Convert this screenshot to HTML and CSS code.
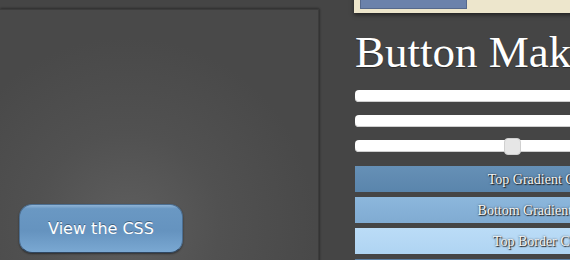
FILE: index.html
```html
<!DOCTYPE html>
<html lang="en">
  <head>
    <meta charset="UTF-8" />
    <title>Button Maker</title>
    <link rel="stylesheet" href="styles.css">
  </head>
  <body>
    <div class="page">
      <div class="preview">
        <button class="css-btn">View the CSS</button>
      </div>

      <div class="controls">
        <div class="frame">
          <div class="frame-img"></div>
        </div>

        <h1>Button Maker</h1>

        <div class="sliders">
          <div class="slider"></div>
          <div class="slider"></div>
          <div class="slider">
            <span class="thumb" style="left: 149px"></span>
          </div>
        </div>

        <div class="swatches">
          <div class="swatch top-grad">Top Gradient Color</div>
          <div class="swatch bottom-grad">Bottom Gradient Color</div>
          <div class="swatch top-border">Top Border Color</div>
          <div class="swatch bottom-border">Bottom Border Color</div>
        </div>
      </div>
    </div>
  </body>
</html>
```

FILE: styles.css
```css
body {
  margin: 0;
  background: #454545;
  overflow: hidden;
  font-family: "Liberation Serif", serif;
}
.page {
  display: flex;
  height: 260px;
}
.preview {
  width: 319px;
  flex-shrink: 0;
  margin-top: 9px;
  height: 300px;
  background: radial-gradient(circle at 40% 72%, #5e5e5e 0, #515151 32%, #494949 65%);
  box-shadow: inset 0 1px 0 #3c3c3c, inset -1px 0 0 #3c3c3c, 0 -1px 2px rgba(0, 0, 0, 0.25), 1px 0 2px rgba(0, 0, 0, 0.25);
  padding: 195px 0 0 19px;
  box-sizing: border-box;
}
.css-btn {
  width: 164px;
  height: 49px;
  border-radius: 13px;
  border: 1px solid #4c6f92;
  border-bottom-color: #2f4660;
  background: linear-gradient(#8fb4d6 0, #6a98c3 8%, #6593bf 55%, #7aa8d2 100%);
  box-shadow: 0 1px 2px rgba(0, 0, 0, 0.45);
  color: #fff;
  font-family: "DejaVu Sans", sans-serif;
  font-size: 16px;
  text-shadow: 0 -1px 0 rgba(0, 0, 0, 0.35);
}
.controls {
  margin-left: 35px;
  width: 376px;
  flex-shrink: 0;
}
.frame {
  width: 300px;
  margin-top: -40px;
  background: #ede6cc;
  padding: 40px 6px 4px;
  box-shadow: 0 2px 4px rgba(0, 0, 0, 0.5);
}
.frame-img {
  width: 105px;
  height: 8px;
  background: #6b82ab;
  border: 1px solid #56698c;
  border-top: none;
}
h1 {
  margin: 16px 0 0 1px;
  font-size: 45px;
  font-weight: normal;
  line-height: 46px;
  color: #fff;
  white-space: nowrap;
  text-shadow: 0 1px 1px rgba(0, 0, 0, 0.4);
}
.sliders {
  display: flex;
  flex-direction: column;
  gap: 13px;
  margin: 15px 0 0 1px;
}
.slider {
  position: relative;
  height: 12px;
  background: #fff;
  border-radius: 4px;
  box-shadow: inset 0 -1px 0 #cfcfcf;
}
.thumb {
  position: absolute;
  top: -2px;
  width: 17px;
  height: 17px;
  background: #e6e6e6;
  border: 1px solid #d0d0d0;
  border-radius: 4px;
  box-sizing: border-box;
}
.swatches {
  display: flex;
  flex-direction: column;
  gap: 5px;
  margin: 14px 0 0 1px;
}
.swatch {
  height: 26px;
  line-height: 27px;
  text-align: center;
  color: #f4f4f4;
  font-size: 14px;
  text-shadow: 1px 1px 1px #222, 0 0 2px rgba(0, 0, 0, 0.6);
}
.top-grad {
  background: linear-gradient(#6690b6, #5a85ac);
}
.bottom-grad {
  background: linear-gradient(#8cb7dc, #80abd2);
}
.top-border {
  background: linear-gradient(#bbdcf7, #afd4f2);
}
.bottom-border {
  background: #5b7fa3;
}
```
